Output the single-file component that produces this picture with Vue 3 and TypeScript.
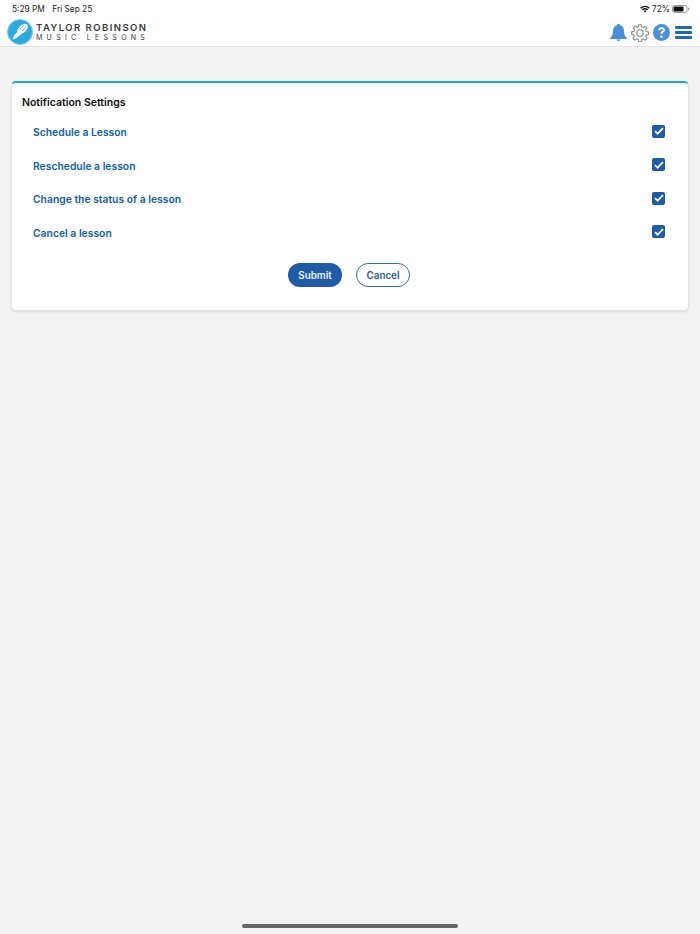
<script setup lang="ts">
const options = [
  'Schedule a Lesson',
  'Reschedule a lesson',
  'Change the status of a lesson',
  'Cancel a lesson'
]
</script>

<template>
  <div class="page">
    <header class="top">
      <div class="status">
        <div class="status-left">
          <span>5:29 PM</span>
          <span>Fri Sep 25</span>
        </div>
        <div class="status-right">
          <svg width="10" height="8" viewBox="0 0 11 8">
            <path d="M.3 2.600a7.200 7.200 0 0 1 10.400 0L9.700 3.700a5.800 5.800 0 0 0-8.400 0zM2.100 4.400a4.700 4.700 0 0 1 6.800 0L7.900 5.500a3.200 3.200 0 0 0-4.800 0zM3.900 6.200a2.100 2.100 0 0 1 3.200 0L5.500 7.900z" fill="#111" />
          </svg>
          <span>72%</span>
          <svg width="18" height="8" viewBox="0 0 18 8">
            <rect x=".5" y=".5" width="14.500" height="7" rx="2" fill="none" stroke="#999" />
            <rect x="1.500" y="1.500" width="10" height="5" rx="1" fill="#111" />
            <path d="M16 2.500c1 .3 1.400.9 1.400 1.500s-.4 1.200-1.400 1.500z" fill="#999" />
          </svg>
        </div>
      </div>
      <div class="nav">
        <div class="brand">
          <svg class="logo" width="26" height="26" viewBox="0 0 26 26">
            <circle cx="13" cy="13" r="12.500" fill="#29abe2" stroke="#86d0ef" />
            <path d="M5.500 20.500l1-3 4.200-5.200 3.200 3.200-5.200 4.100z" fill="#fff" />
            <ellipse cx="15.500" cy="10" rx="6.500" ry="3.700" transform="rotate(-43 15.500 10)" fill="#fff" />
            <path d="M13.200 9.800l3.800-3.500M15 11.800l3.800-3.500" stroke="#29abe2" stroke-width=".7" />
          </svg>
          <div class="brand-text">
            <div class="brand-name">TAYLOR ROBINSON</div>
            <div class="brand-sub">MUSIC LESSONS</div>
          </div>
        </div>
        <div class="tools">
          <svg width="17" height="17" viewBox="0 0 17 17">
            <path d="M8.500 0c.9 0 1.500.5 1.600 1.300C12.800 2 14 4.200 14 7c0 3.200.8 5 2.600 6.700.5.500.2 1.300-.5 1.300H.9c-.7 0-1-.8-.5-1.300C2.200 12 3 10.200 3 7c0-2.800 1.200-5 3.900-5.700C7 .5 7.600 0 8.500 0zM6.300 15.600h4.400c-.2.900-1.100 1.400-2.200 1.400s-2-.5-2.200-1.400z" fill="#4a90d9" />
          </svg>
          <svg width="18" height="18" viewBox="0 0 18 18" fill="none" stroke="#8a8a8a" stroke-width="1.100">
            <circle cx="9" cy="9" r="3.200" />
            <path d="M7.700.7h2.600l.4 2.300 1.500.6 1.900-1.300 1.800 1.800-1.300 1.900.6 1.500 2.300.4v2.600l-2.300.4-.6 1.500 1.300 1.900-1.800 1.800-1.900-1.300-1.500.6-.4 2.300H7.700l-.4-2.300-1.500-.6-1.900 1.300-1.800-1.800 1.300-1.900-.6-1.500L.7 10.300V7.700L3 7.300l.6-1.500-1.300-1.900 1.800-1.800 1.900 1.300 1.500-.6z" stroke-linejoin="round" />
          </svg>
          <svg width="17" height="17" viewBox="0 0 17 17">
            <circle cx="8.500" cy="8.500" r="8.500" fill="#4a90d9" />
            <path d="M5.200 6.300c.1-2 1.500-3.100 3.400-3.100 2 0 3.300 1.200 3.300 2.700 0 1.200-.7 1.900-1.500 2.400-.7.500-1 .8-1 1.500H7.400c0-1.300.4-1.900 1.200-2.500.7-.5 1-.8 1-1.300 0-.6-.4-1-1.100-1-.8 0-1.200.5-1.300 1.300z" fill="#fff" />
            <circle cx="8.400" cy="12.700" r="1.300" fill="#fff" />
          </svg>
          <div class="burger"><i></i><i></i><i></i></div>
        </div>
      </div>
    </header>

    <main class="content">
      <section class="card">
        <h1>Notification Settings</h1>
        <div class="rows">
          <div v-for="item in options" :key="item" class="row">
            <span class="label">{{ item }}</span>
            <span class="check">
              <svg width="10" height="8" viewBox="0 0 10 8">
                <path d="M1 4.200l2.600 2.500L9 1.200" fill="none" stroke="#fff" stroke-width="1.700" />
              </svg>
            </span>
          </div>
        </div>
        <div class="actions">
          <button class="btn primary">Submit</button>
          <button class="btn outline">Cancel</button>
        </div>
      </section>
    </main>

    <div class="home-bar"></div>
  </div>
</template>

<style>
html,
body {
  margin: 0;
  background: #f2f2f2;
}
</style>

<style scoped>
.page {
  position: relative;
  height: 934px;
  overflow: hidden;
  background: #f2f2f2;
  font-family: Inter, 'Liberation Sans', sans-serif;
}

.top {
  height: 46px;
  background: #fff;
  border-bottom: 1px solid #e3e3e3;
}

.status {
  display: flex;
  justify-content: space-between;
  align-items: center;
  height: 17px;
  padding: 0 10px 0 12px;
  font-size: 8.300px;
  color: #222;
}

.status-left {
  display: flex;
  gap: 7.500px;
}

.status-right {
  display: flex;
  align-items: center;
  gap: 2px;
}

.nav {
  display: flex;
  justify-content: space-between;
  align-items: center;
  height: 30px;
  padding: 0 8px 0 7px;
}

.brand {
  display: flex;
  align-items: center;
  gap: 3px;
}

.brand-text {
  color: #3a3a3a;
  line-height: 1;
  white-space: nowrap;
}

.brand-name {
  font-size: 9.500px;
  font-weight: 600;
  letter-spacing: 1.450px;
}

.brand-sub {
  margin-top: 2px;
  font-size: 7px;
  letter-spacing: 4.300px;
}

.tools {
  display: flex;
  align-items: center;
  gap: 4px;
  margin-top: 1px;
}

.burger {
  display: flex;
  flex-direction: column;
  gap: 2px;
  width: 17px;
  margin-left: 1px;
}

.burger i {
  display: block;
  height: 3px;
  background: #1f69b5;
  border-radius: 1px;
}

.content {
  padding: 34px 11px 0;
}

.card {
  height: 230px;
  box-sizing: border-box;
  padding: 13px 11px 0 10px;
  background: #fff;
  border: 1px solid #e3e3e3;
  border-top: 2px solid #1ea5e0;
  border-radius: 5px;
  box-shadow: 0 1px 2px rgba(0, 0, 0, 0.1);
}

h1 {
  margin: 0;
  font-size: 10.500px;
  line-height: 14px;
  font-weight: 600;
  color: #111;
}

.rows {
  margin-top: 5px;
}

.row {
  display: flex;
  justify-content: space-between;
  align-items: center;
  height: 33.500px;
  padding: 0 12px 0 11px;
  font-size: 10.350px;
  font-weight: 600;
  color: #0f63aa;
}

.label {
  margin-top: 1px;
}

.check {
  display: flex;
  align-items: center;
  justify-content: center;
  width: 13px;
  height: 13px;
  margin-bottom: 1px;
  background: #1f5ca8;
  border-radius: 2px;
}

.actions {
  display: flex;
  justify-content: center;
  gap: 14px;
  margin-top: 14px;
  padding-right: 1px;
}

.btn {
  width: 54px;
  height: 24px;
  padding: 0;
  border-radius: 12px;
  font-family: inherit;
  font-size: 9.800px;
  font-weight: 600;
}

.primary {
  background: #1f5ca8;
  border: 0;
  color: #f2f6fb;
}

.outline {
  background: #fff;
  border: 1px solid #2f6db0;
  color: #1f5ca8;
}

.home-bar {
  position: absolute;
  left: 242px;
  top: 924px;
  width: 216px;
  height: 4px;
  border-radius: 2px;
  background: #666;
}
</style>
